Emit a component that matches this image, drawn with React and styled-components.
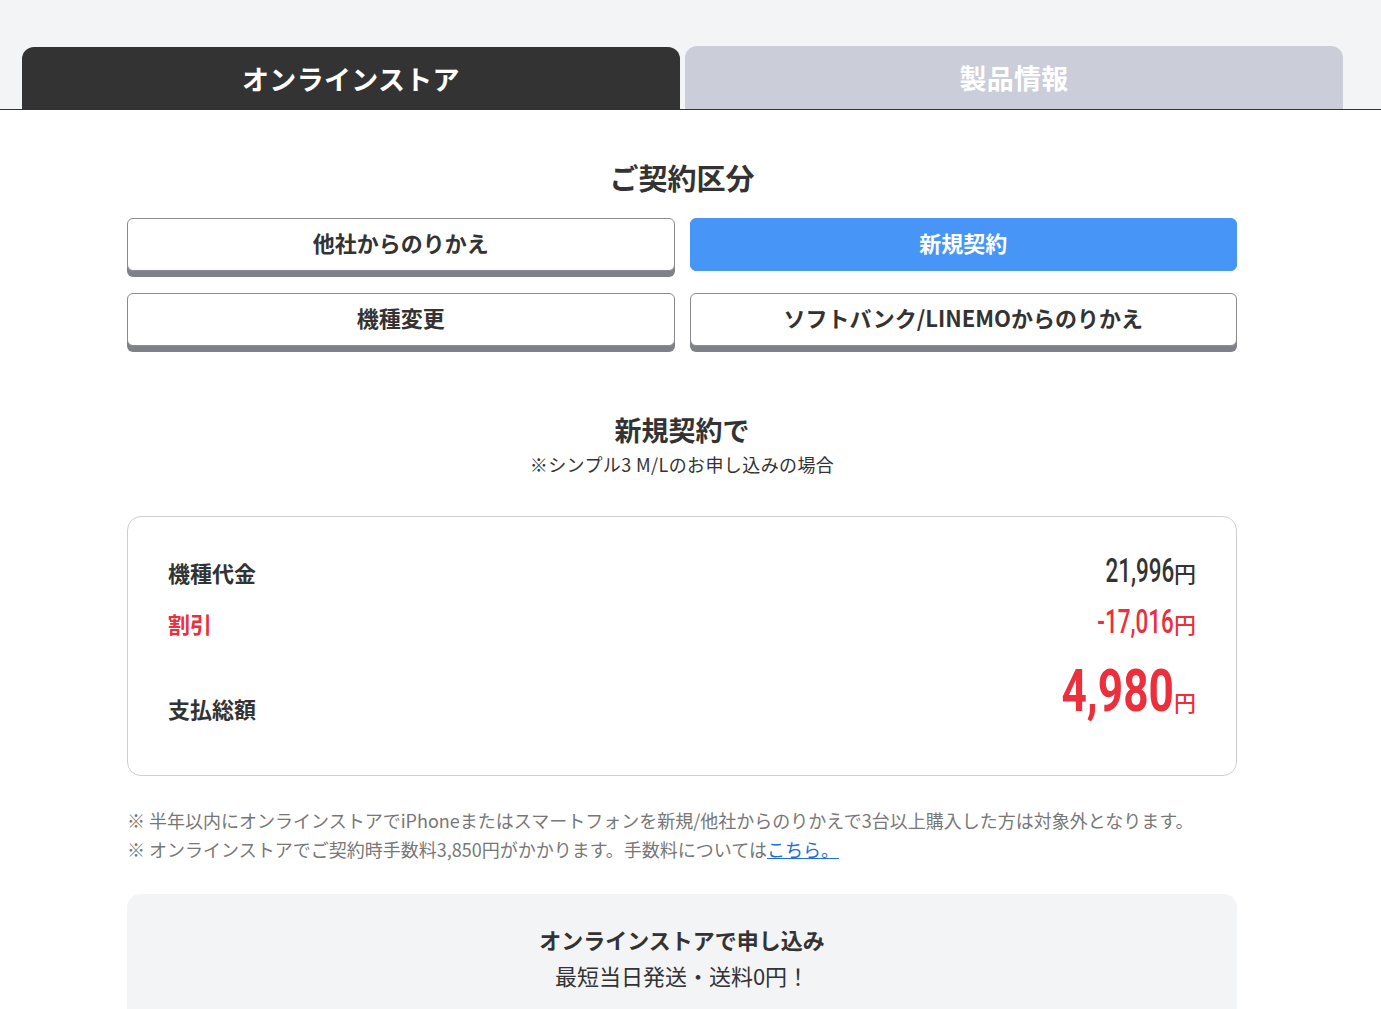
import styled, { createGlobalStyle } from 'styled-components';

const Global = createGlobalStyle`
  body{
    margin:0;
    background:#fff;
    font-family:"Noto Sans CJK JP","Noto Sans",sans-serif;
    color:#333;
  }
`;

const TabBar = styled.div`
  display:flex;
  gap:5px;
  align-items:flex-end;
  padding:46px 38px 0 22px;
  background:#f3f4f6;
  border-bottom:1px solid #333;
`;

const Tab = styled.div`
  flex:1;
  height:${p=>p.$active?'62px':'63px'};
  display:flex;
  align-items:center;
  justify-content:center;
  border-radius:12px 12px 0 0;
  background:${p=>p.$active?'#333':'#cbcdd8'};
  color:#fff;
  font-size:27px;
  font-weight:700;
  letter-spacing:0.3px;
`;

const Main = styled.div`
  padding-right:17px;
`;

const Content = styled.main`
  width:1110px;
  margin:0 auto;
  padding-top:47px;
`;

const Heading = styled.h2`
  margin:0;
  text-align:center;
  font-size:${p=>p.$size||29}px;
  line-height:40px;
  font-weight:700;
  color:#333;
`;

const Sub = styled.p`
  margin:0;
  text-align:center;
  font-size:18px;
  line-height:28px;
  letter-spacing:0.4px;
  color:#333;
`;

const ChoiceGrid = styled.div`
  display:grid;
  grid-template-columns:1fr 1fr;
  column-gap:15px;
  row-gap:22px;
  margin-top:21px;
`;

const Choice = styled.button`
  height:53px;
  padding:0 0 5px;
  border-radius:6px;
  font-family:inherit;
  font-size:22px;
  font-weight:700;
  cursor:pointer;
  border:1px solid ${p=>p.$active?'#4695f7':'#8a8a90'};
  background:${p=>p.$active?'#4695f7':'#fff'};
  color:${p=>p.$active?'#fff':'#333'};
  box-shadow:${p=>p.$active?'none':'0 6px 0 #808088'};
`;

const Result = styled.section`
  margin-top:64px;
`;

const PriceCard = styled.div`
  margin-top:38px;
  border:1px solid #cfcfd2;
  border-radius:14px;
  padding:36px 40px 55px;
`;

const Row = styled.div`
  display:flex;
  justify-content:space-between;
  align-items:${p=>p.$total?'flex-end':'baseline'};
  color:${p=>p.$red?'#eb2f3c':'#333'};
  margin-top:${p=>p.$gap||0}px;
`;

const Label = styled.span`
  font-size:22px;
  font-weight:700;
  line-height:${p=>p.$tight?24:34}px;
`;

const Price = styled.span`
  color:${p=>p.$red?'#eb2f3c':'#333'};
`;

const Amount = styled.span`
  display:inline-block;
  font-family:Roboto,"Liberation Sans",sans-serif;
  font-size:${p=>p.$big?59:34}px;
  font-weight:${p=>p.$big?700:500};
  line-height:1;
  transform:scaleX(${p=>p.$big?0.75:0.66});
  transform-origin:right bottom;
`;

const Yen = styled.span`
  font-size:22px;
  font-weight:500;
`;

const Notes = styled.div`
  margin-top:30px;
  font-size:18px;
  line-height:29px;
  color:#777;
`;

const Link = styled.a`
  color:#1f6fd8;
  text-decoration:underline;
`;

const ApplyBox = styled.div`
  margin-top:30px;
  background:#f3f4f6;
  border-radius:14px 14px 0 0;
  padding:29px 0 40px;
  text-align:center;
  color:#333;
`;

const ApplyTitle = styled.div`
  font-size:22px;
  font-weight:700;
  line-height:32px;
`;

const ApplyText = styled.div`
  font-size:22px;
  line-height:40px;
`;

const choices = [
  {label:'他社からのりかえ'},
  {label:'新規契約', active:true},
  {label:'機種変更'},
  {label:'ソフトバンク/LINEMOからのりかえ'},
];

export default function App() {
  return (
    <>
      <Global/>
      <TabBar>
        <Tab $active>オンラインストア</Tab>
        <Tab>製品情報</Tab>
      </TabBar>
      <Main>
        <Content>
          <Heading>ご契約区分</Heading>
          <ChoiceGrid>
            {choices.map(c=>(
              <Choice key={c.label} $active={c.active}>{c.label}</Choice>
            ))}
          </ChoiceGrid>

          <Result>
            <Heading $size={27}>新規契約で</Heading>
            <Sub>※シンプル3 M/Lのお申し込みの場合</Sub>
            <PriceCard>
              <Row>
                <Label>機種代金</Label>
                <Price><Amount>21,996</Amount><Yen>円</Yen></Price>
              </Row>
              <Row $red $gap={15}>
                <Label>割引</Label>
                <Price $red><Amount>-17,016</Amount><Yen>円</Yen></Price>
              </Row>
              <Row $total $gap={21}>
                <Label $tight>支払総額</Label>
                <Price $red><Amount $big>4,980</Amount><Yen>円</Yen></Price>
              </Row>
            </PriceCard>
          </Result>

          <Notes>
            <div>※ 半年以内にオンラインストアでiPhoneまたはスマートフォンを新規/他社からのりかえで3台以上購入した方は対象外となります。</div>
            <div>※ オンラインストアでご契約時手数料3,850円がかかります。手数料については<Link href="#">こちら。</Link></div>
          </Notes>

          <ApplyBox>
            <ApplyTitle>オンラインストアで申し込み</ApplyTitle>
            <ApplyText>最短当日発送・送料0円！</ApplyText>
          </ApplyBox>
        </Content>
      </Main>
    </>
  );
}
